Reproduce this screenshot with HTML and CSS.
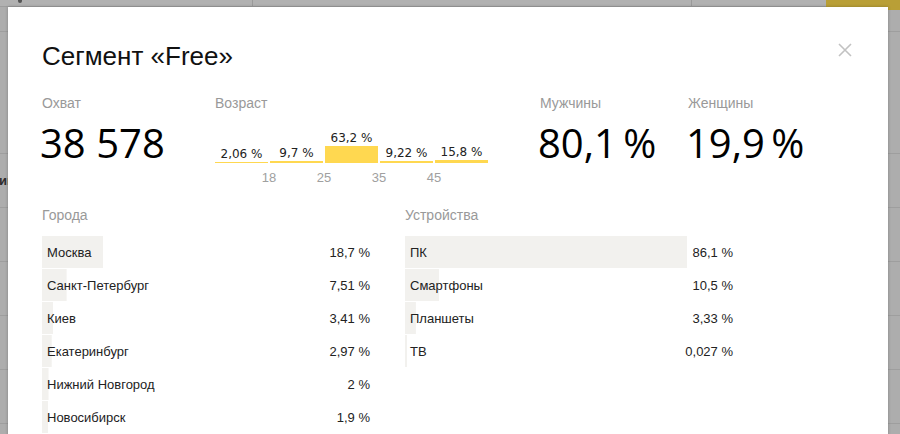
FILE: index.html
```html
<!DOCTYPE html>
<html>
	<head>
		<meta charset="utf-8">
		<title>Сегмент «Free»</title>

		<link rel="stylesheet" href="styles.css">
	</head>
	<body>
		<div class="page">
			<div class="topbar">
				<div class="tab tab-first"><span class="dot"></span></div>
				<div class="tab"></div>
				<div class="tab tab-last"></div>
				<div class="tab-button"></div>
			</div>
			<div class="bg-row bg-row-short"></div>
			<div class="bg-row bg-row-tall"></div>
			<div class="bg-row"><span class="bg-text">ий</span></div>
			<div class="bg-row"></div>
			<div class="bg-row"></div>
			<div class="bg-row"></div>
			<div class="bg-row"></div>
		</div>

		<div class="modal">
			<div class="modal-head">
				<h1 class="title">Сегмент «Free»</h1>
				<svg class="close" width="14" height="14" viewBox="0 0 14 14">
					<path d="M1 1L13 13M13 1L1 13" stroke="#c2c2c2" stroke-width="1.6" fill="none"/>
				</svg>
			</div>

			<div class="stats">
				<div class="stat stat-reach">
					<div class="label">Охват</div>
					<div class="big">38 578</div>
				</div>
				<div class="stat stat-age">
					<div class="label">Возраст</div>
					<div class="chart">
						<div class="seg"><span class="seg-value">2,06 %</span><div class="seg-bar" style="height: 1px"></div></div>
						<div class="seg"><span class="seg-value">9,7 %</span><div class="seg-bar" style="height: 2px"></div></div>
						<div class="seg"><span class="seg-value">63,2 %</span><div class="seg-bar" style="height: 17px"></div></div>
						<div class="seg"><span class="seg-value">9,22 %</span><div class="seg-bar" style="height: 2px"></div></div>
						<div class="seg"><span class="seg-value">15,8 %</span><div class="seg-bar" style="height: 3px"></div></div>
					</div>
					<div class="ticks">
						<span>18</span>
						<span>25</span>
						<span>35</span>
						<span>45</span>
					</div>
				</div>
				<div class="stat stat-men">
					<div class="label">Мужчины</div>
					<div class="big big-pct">80,1 %</div>
				</div>
				<div class="stat">
					<div class="label">Женщины</div>
					<div class="big big-pct">19,9 %</div>
				</div>
			</div>

			<div class="lists">
				<div class="list">
					<div class="label list-label">Города</div>
					<div class="row" style="background-size: 18.7% 100%"><span>Москва</span><span>18,7 %</span></div>
					<div class="row" style="background-size: 7.51% 100%"><span>Санкт-Петербург</span><span>7,51 %</span></div>
					<div class="row" style="background-size: 3.41% 100%"><span>Киев</span><span>3,41 %</span></div>
					<div class="row" style="background-size: 2.97% 100%"><span>Екатеринбург</span><span>2,97 %</span></div>
					<div class="row" style="background-size: 2% 100%"><span>Нижний Новгород</span><span>2 %</span></div>
					<div class="row" style="background-size: 1.9% 100%"><span>Новосибирск</span><span>1,9 %</span></div>
				</div>
				<div class="list">
					<div class="label list-label">Устройства</div>
					<div class="row" style="background-size: 86.1% 100%"><span>ПК</span><span>86,1 %</span></div>
					<div class="row" style="background-size: 10.5% 100%"><span>Смартфоны</span><span>10,5 %</span></div>
					<div class="row" style="background-size: 3.33% 100%"><span>Планшеты</span><span>3,33 %</span></div>
					<div class="row" style="background-size: 2px 100%"><span>ТВ</span><span>0,027 %</span></div>
				</div>
			</div>
		</div>
	</body>
</html>
```

FILE: styles.css
```css
* {
	margin: 0;
	padding: 0;
	box-sizing: border-box;
}

body {
	width: 900px;
	height: 434px;
	overflow: hidden;
	background: #adadad;
	font-family: "Liberation Sans", Arial, sans-serif;
	color: #222222;
	position: relative;
}

/* page behind the overlay */

.topbar {
	height: 7px;
	display: flex;
	background: #b1b1b1;
	border-bottom: 1px solid #9d9d9d;
}

.tab {
	width: 253px;
	border-right: 1px solid #9a9a9a;
	position: relative;
}

.tab:nth-child(2) {
	width: 439px;
}

.tab-last {
	width: 134px;
	border-right: none;
}

.dot {
	position: absolute;
	left: 18px;
	top: 0;
	width: 4px;
	height: 3px;
	border-radius: 0 0 2px 2px;
	background: #555555;
}

.tab-button {
	flex: 1;
	height: 10px;
	background: #b99f36;
}

.bg-row {
	height: 54px;
	border-bottom: 1px solid #9e9e9e;
	display: flex;
	align-items: center;
}

.bg-row-short {
	height: 25px;
}

.bg-row-tall {
	height: 122px;
}

.bg-text {
	margin-left: -1px;
	white-space: nowrap;
	font-size: 13px;
	font-weight: bold;
	color: #2b2b2b;
}

/* modal */

.modal {
	position: absolute;
	top: 7px;
	left: 8px;
	width: 880px;
	height: 440px;
	background: #ffffff;
	box-shadow: 0 0 3px rgba(0, 0, 0, 0.25);
	padding: 34px 36px 0 34px;
}

.modal-head {
	display: flex;
	justify-content: space-between;
	align-items: flex-start;
}

.title {
	font-weight: normal;
	font-size: 26px;
	line-height: 30px;
	color: #111111;
}

.close {
	margin-top: 2px;
}

.stats {
	display: flex;
	margin-top: 24px;
}

.stat-reach {
	width: 173px;
}

.stat-age {
	width: 325px;
}

.stat-men {
	width: 148px;
}

.label {
	font-size: 14px;
	line-height: 16px;
	color: #999999;
}

.big {
	font-family: "Open Sans", sans-serif;
	font-size: 40px;
	line-height: 44px;
	margin-top: 10px;
	color: #000000;
	margin-left: -2px;
}

.big-pct {
	word-spacing: -4px;
}

.chart {
	display: flex;
	align-items: flex-end;
	gap: 2px;
	height: 52px;
}

.seg {
	width: 53px;
	display: flex;
	flex-direction: column;
	align-items: center;
}

.seg-value {
	font-family: "DejaVu Sans", Verdana, sans-serif;
	font-size: 12px;
	line-height: 14px;
	margin-bottom: 1px;
	color: #222222;
	white-space: nowrap;
}

.seg-bar {
	width: 100%;
	background: #ffd850;
}

.ticks {
	display: flex;
	margin-top: 7px;
	padding-left: 44px;
	font-size: 13px;
	line-height: 15px;
	color: #a0a0a0;
}

.ticks span {
	width: 20px;
	text-align: center;
	margin-right: 35px;
}

.lists {
	display: flex;
	gap: 35px;
	margin-top: 22px;
}

.list {
	width: 328px;
}

.list-label {
	margin-bottom: 13px;
}

.row {
	height: 32px;
	margin-bottom: 1px;
	display: flex;
	justify-content: space-between;
	align-items: center;
	padding-left: 5px;
	font-size: 13px;
	color: #222222;
	background-image: linear-gradient(#f2f1ee, #f2f1ee);
	background-repeat: no-repeat;
}
```
